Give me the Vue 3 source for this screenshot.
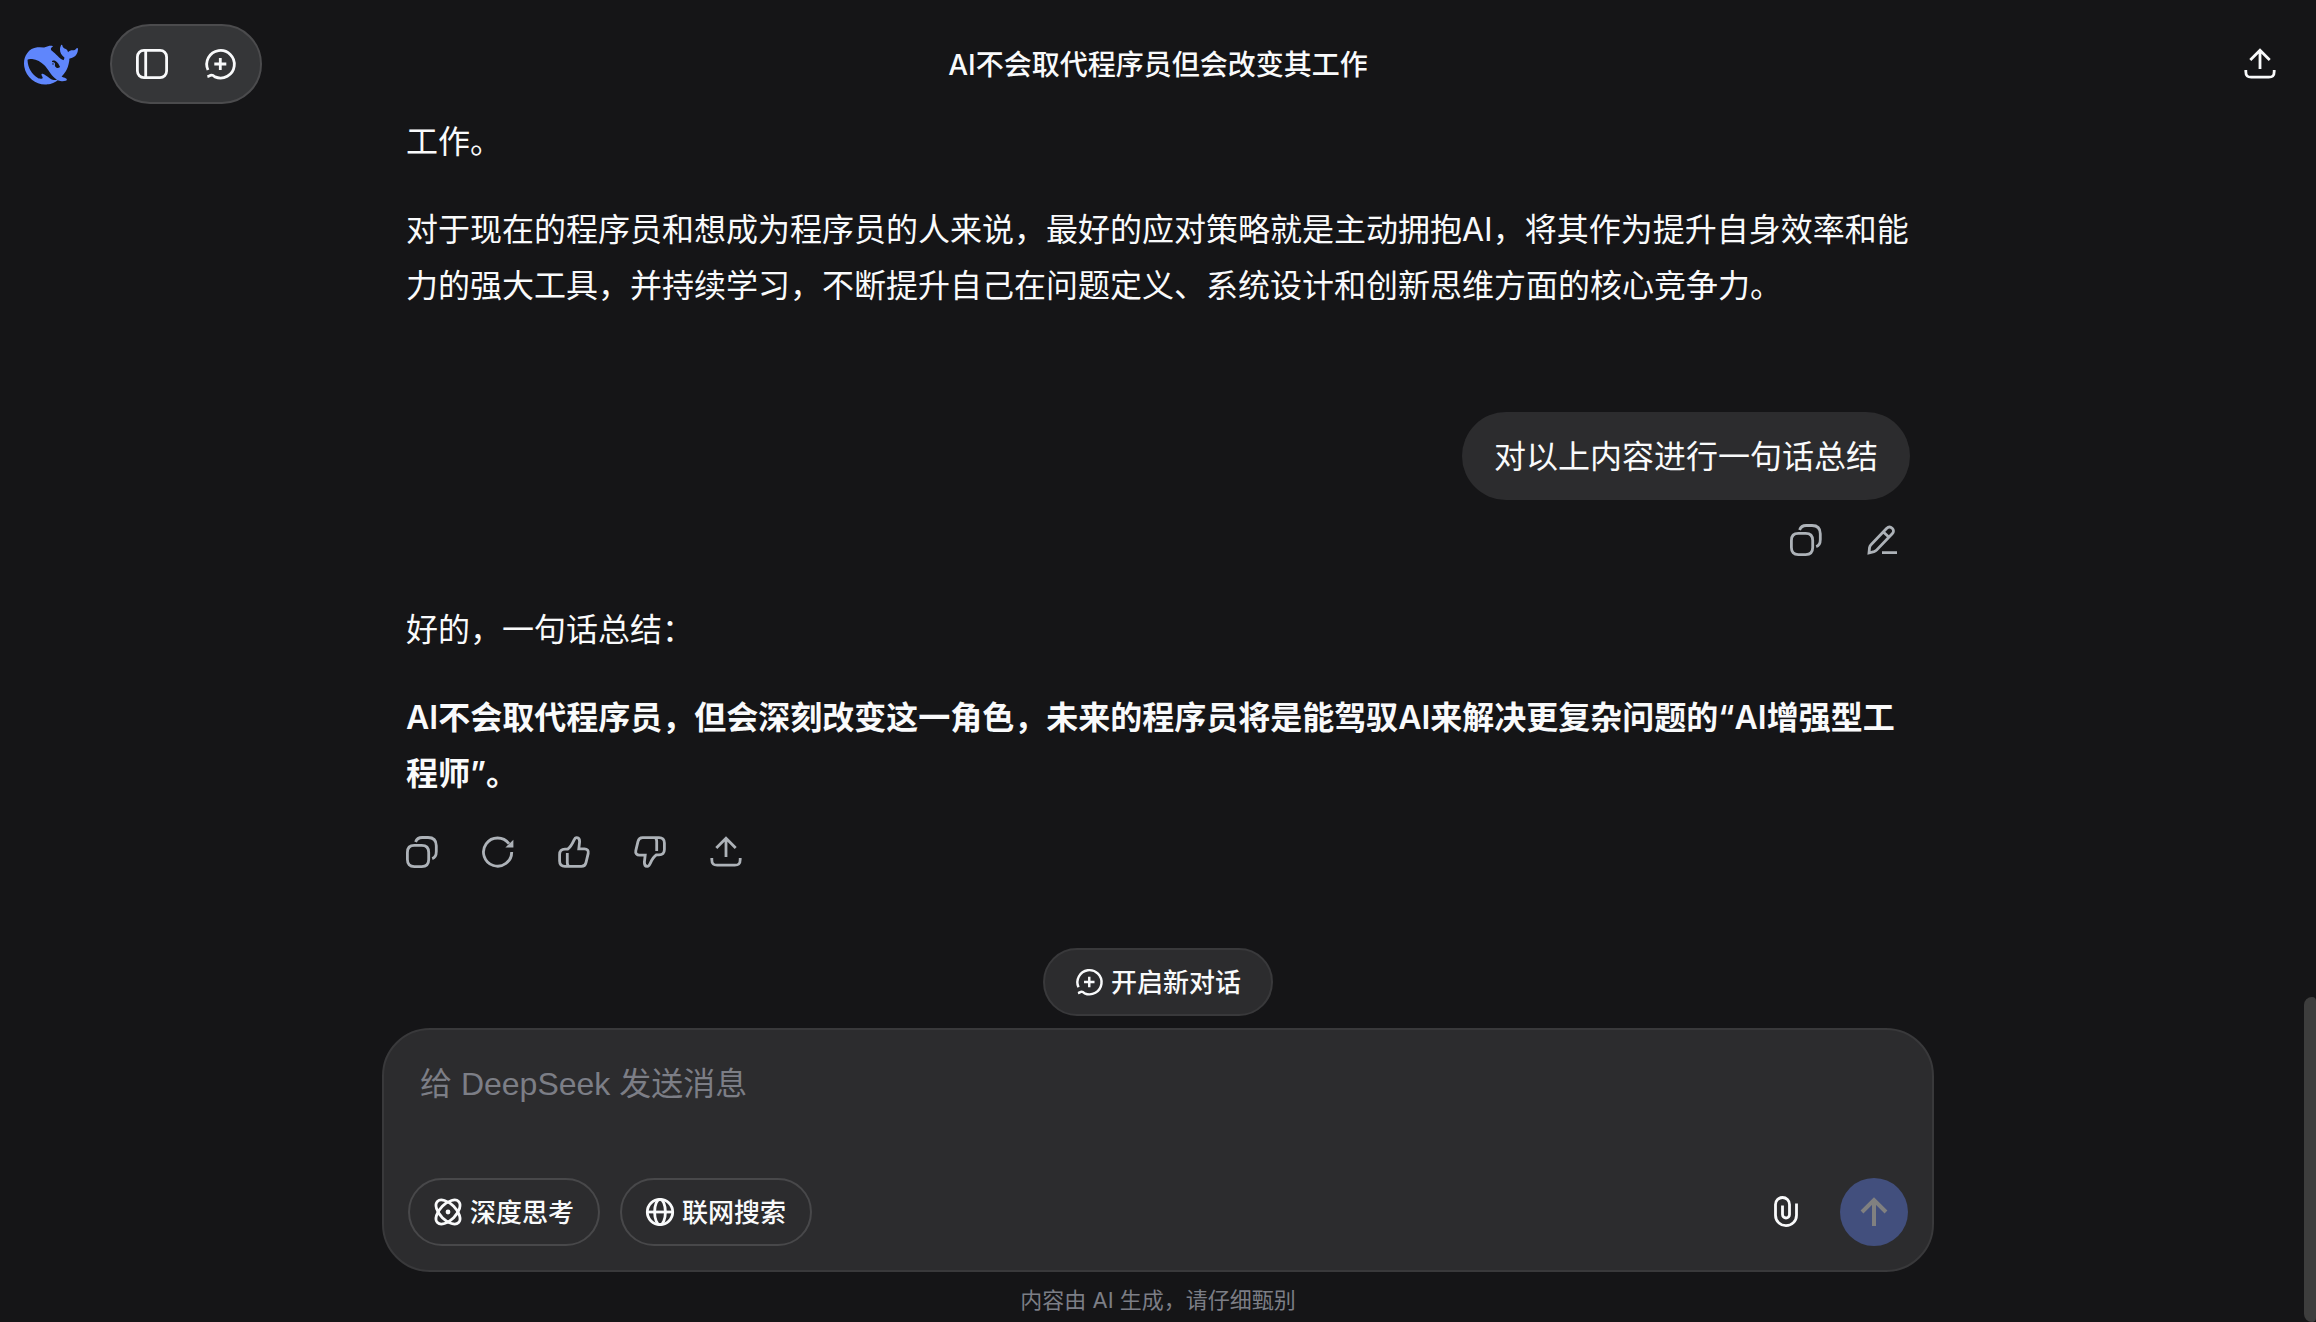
<template>
  <div class="page">
    <header class="topbar">
      <div class="topbar-left">
        <a class="logo" href="#" aria-label="DeepSeek">
          <svg viewBox="0 0 24 24" fill="currentColor">
            <path d="M23.748 4.482c-.254-.124-.364.113-.512.234-.051.039-.094.09-.137.136-.372.397-.806.657-1.373.626-.829-.046-1.537.214-2.163.848-.133-.782-.575-1.248-1.247-1.548-.352-.156-.708-.311-.955-.65-.172-.241-.219-.51-.305-.774-.055-.16-.11-.323-.293-.35-.2-.031-.278.136-.356.276-.313.572-.434 1.202-.422 1.84.027 1.436.633 2.58 1.838 3.393.137.093.172.187.129.323-.082.28-.18.552-.266.833-.055.179-.137.217-.329.14a5.526 5.526 0 01-1.736-1.18c-.857-.828-1.631-1.742-2.597-2.458a11.365 11.365 0 00-.689-.471c-.985-.957.13-1.743.388-1.836.27-.098.093-.432-.779-.428-.872.004-1.67.295-2.687.684a3.055 3.055 0 01-.465.137 9.597 9.597 0 00-2.883-.102c-1.885.21-3.39 1.102-4.497 2.623C.082 8.606-.231 10.684.152 12.85c.403 2.284 1.569 4.175 3.36 5.653 1.858 1.533 3.997 2.284 6.438 2.14 1.482-.085 3.133-.284 4.994-1.86.47.234.962.327 1.78.397.63.059 1.236-.03 1.705-.128.735-.156.684-.837.419-.961-2.155-1.004-1.682-.595-2.113-.926 1.096-1.296 2.746-2.642 3.392-7.003.05-.347.007-.565 0-.845-.004-.17.035-.237.23-.256a4.173 4.173 0 001.545-.475c1.396-.763 1.96-2.015 2.093-3.517.02-.23-.004-.467-.247-.588zM11.581 18c-2.089-1.642-3.102-2.183-3.52-2.16-.392.024-.321.471-.235.763.09.288.207.486.371.739.114.167.192.416-.113.603-.673.416-1.842-.14-1.897-.167-1.361-.802-2.5-1.86-3.301-3.307-.774-1.393-1.224-2.887-1.298-4.482-.02-.386.093-.522.477-.592a4.696 4.696 0 011.529-.039c2.132.312 3.946 1.265 5.468 2.774.868.86 1.525 1.887 2.202 2.891.72 1.066 1.494 2.082 2.48 2.914.348.292.625.514.891.677-.802.09-2.14.11-3.054-.614zm1-6.44a.306.306 0 01.415-.287.302.302 0 01.2.288.306.306 0 01-.31.307.303.303 0 01-.304-.308zm3.11 1.596c-.2.081-.399.151-.59.16a1.245 1.245 0 01-.798-.254c-.274-.23-.47-.358-.552-.758a1.73 1.73 0 01.016-.588c.07-.327-.008-.537-.239-.727-.187-.156-.426-.199-.688-.199a.559.559 0 01-.254-.078.253.253 0 01-.114-.358c.028-.054.16-.186.192-.21.356-.202.767-.136 1.146.016.352.144.618.408 1.001.782.391.451.462.576.685.914.176.265.336.537.445.848.067.195-.019.354-.25.452z" />
          </svg>
        </a>
        <div class="nav-pill">
          <button class="icon-btn" aria-label="展开侧边栏">
            <svg class="icon" viewBox="0 0 32 32">
              <rect x="1.4" y="2.4" width="29.2" height="27.2" rx="6.5" />
              <path d="M9.7 2.4V29.6" />
            </svg>
          </button>
          <button class="icon-btn" aria-label="新对话" @click="newChat">
            <svg class="icon" viewBox="0 0 32 32"><path :d="icons.newChat" /></svg>
          </button>
        </div>
      </div>
      <h1 class="title">{{ title }}</h1>
      <div class="topbar-right">
        <button class="icon-btn" aria-label="分享">
          <svg class="icon" viewBox="0 0 32 32"><path :d="icons.share" /></svg>
        </button>
      </div>
    </header>

    <main class="chat">
      <article class="answer">
        <p>工作。</p>
        <p>对于现在的程序员和想成为程序员的人来说，最好的应对策略就是主动拥抱AI，将其作为提升自身效率和能力的强大工具，并持续学习，不断提升自己在问题定义、系统设计和创新思维方面的核心竞争力。</p>
      </article>

      <article class="question">
        <div class="bubble">对以上内容进行一句话总结</div>
        <div class="actions">
          <button class="icon-btn" aria-label="复制">
            <svg class="icon" viewBox="0 0 32 32"><path :d="icons.copy" /></svg>
          </button>
          <button class="icon-btn" aria-label="编辑">
            <svg class="icon" viewBox="0 0 32 32"><path :d="icons.edit" /></svg>
          </button>
        </div>
      </article>

      <article class="answer">
        <p>好的，一句话总结：</p>
        <p><strong>AI不会取代程序员，但会深刻改变这一角色，未来的程序员将是能驾驭AI来解决更复杂问题的“AI增强型工程师”。</strong></p>
        <div class="actions">
          <button class="icon-btn" aria-label="复制">
            <svg class="icon" viewBox="0 0 32 32"><path :d="icons.copy" /></svg>
          </button>
          <button class="icon-btn" aria-label="重新生成">
            <svg class="icon" viewBox="0 0 32 32">
              <path d="M29.7 16A14.1 14.1 0 1 1 27 7.8" />
              <path class="solid" d="M31.4 3.8V11.6H23.4Z" />
            </svg>
          </button>
          <button class="icon-btn" aria-label="喜欢">
            <svg class="icon" viewBox="0 0 32 32"><path :d="icons.thumb" /></svg>
          </button>
          <button class="icon-btn" aria-label="不喜欢">
            <svg class="icon" viewBox="0 0 32 32"><path :d="icons.thumb" transform="rotate(180 16 16)" /></svg>
          </button>
          <button class="icon-btn" aria-label="分享">
            <svg class="icon" viewBox="0 0 32 32"><path :d="icons.share" /></svg>
          </button>
        </div>
      </article>
    </main>

    <footer class="bottom">
      <button class="new-chat" @click="newChat">
        <svg class="icon small" viewBox="0 0 32 32"><path :d="icons.newChat" /></svg>
        <span>开启新对话</span>
      </button>

      <form class="composer" @submit.prevent="send">
        <textarea v-model="message" aria-label="消息" placeholder="给 DeepSeek 发送消息"></textarea>
        <div class="tools">
          <button type="button" class="toggle" :aria-pressed="deepThink" @click="deepThink = !deepThink">
            <svg class="icon small" viewBox="0 0 28 28">
              <ellipse cx="14" cy="14" rx="15" ry="8" transform="rotate(45 14 14)" />
              <ellipse cx="14" cy="14" rx="15" ry="8" transform="rotate(-45 14 14)" />
              <circle class="solid" cx="14" cy="14" r="2.4" />
            </svg>
            <span>深度思考</span>
          </button>
          <button type="button" class="toggle" :aria-pressed="webSearch" @click="webSearch = !webSearch">
            <svg class="icon small" viewBox="0 0 28 28">
              <circle cx="14" cy="14" r="12.7" />
              <ellipse cx="14" cy="14" rx="5.4" ry="12.7" />
              <path d="M1.3 14H26.7" />
            </svg>
            <span>联网搜索</span>
          </button>
          <div class="send-group">
            <button type="button" class="round" aria-label="上传附件">
              <svg class="icon clip" viewBox="0 0 24 32">
                <path d="M22.5 7.5V19.2A10.5 10.5 0 0 1 1.5 19.2V8.5A7 7 0 0 1 15.5 8.5V18.5A3.5 3.5 0 0 1 8.5 18.5V9.5" />
              </svg>
            </button>
            <button type="submit" class="round send" aria-label="发送">
              <svg class="icon arrow" viewBox="0 0 32 32">
                <path d="M16 30V3.5M4 16L16 4L28 16" />
              </svg>
            </button>
          </div>
        </div>
      </form>

      <p class="notice">内容由 AI 生成，请仔细甄别</p>
    </footer>

    <div class="scroll-thumb" aria-hidden="true"></div>
  </div>
</template>

<script setup>
import { ref } from 'vue';

const title = 'AI不会取代程序员但会改变其工作';

const message = ref('');
const deepThink = ref(false);
const webSearch = ref(false);

const icons = {
  newChat: 'M4 22A13.8 13.8 0 1 1 11 28.9C9.4 27.4 8 26.8 6.5 27.4C5.5 27.9 4.6 28.4 3.4 28.7M16.3 10V22M10.3 16H22.3',
  copy: 'M8.3 9.4H15.7Q22.7 9.4 22.7 16.4V23.6Q22.7 30.6 15.7 30.6H8.3Q1.4 30.6 1.4 23.6V16.4Q1.4 9.4 8.3 9.4ZM9.6 6C10.6 3 13 1.5 16.2 1.5H22C27.8 1.5 30.3 4 30.3 9.8V15.4C30.3 19 29 21.6 26.2 22.6',
  edit: 'M3 29L3.5 23.8C3.7 22.5 4.1 21.6 5 20.7L20.5 4.5C22.3 2.7 24.6 2.7 26.2 4.2C27.9 5.8 27.9 8 26.2 9.8L10.8 25.9C10 26.8 9.3 27.3 8 27.7ZM17.4 8L23 13.2M16 28.7H31',
  thumb: 'M9.5 13.2C12.5 11.5 14.5 7.5 16 4.2C16.8 2.2 17.6 1.5 18.8 1.6C21 1.8 21.8 3.6 21.6 6L20.8 12.8H26.5C29.3 12.8 30.8 14.8 30.2 17.4L28 26.6C27.4 29.2 26 30.4 23.4 30.4H7C3.4 30.4 1.6 28.6 1.6 25V18.6C1.6 15 3.4 13.2 7 13.2ZM9.3 17V26.4Q9.3 29.4 11 30.2',
  share: 'M16 2.5V21M6.3 12L16 2.3L25.7 12M1.8 22V23.6C1.8 27.6 3.2 29.2 7.2 29.2H24.8C28.8 29.2 30.2 27.6 30.2 23.6V22',
};

function newChat() {
  message.value = '';
}

function send() {
  if (!message.value.trim()) {
    return;
  }
  message.value = '';
}
</script>

<style>
body {
  margin: 0;
  background: #151517;
}
</style>

<style scoped>
.page {
  display: flex;
  flex-direction: column;
  min-height: 100vh;
  color: #f9fafb;
  font-family: Inter, "Noto Sans CJK SC", sans-serif;
  font-size: 32px;
  line-height: 56px;
}

button {
  display: flex;
  align-items: center;
  justify-content: center;
  padding: 0;
  border: none;
  background: none;
  color: inherit;
  font: inherit;
  cursor: pointer;
}

.icon {
  display: block;
  width: 32px;
  height: 32px;
  overflow: visible;
  fill: none;
  stroke: currentColor;
  stroke-width: 2.8;
}

.icon.small {
  width: 28px;
  height: 28px;
}

.icon .solid {
  fill: currentColor;
  stroke: none;
}

.topbar {
  display: grid;
  grid-template-columns: 1fr auto 1fr;
  align-items: center;
  padding: 24px 24px 10px;
}

.topbar-left {
  display: flex;
  align-items: center;
  gap: 32px;
}

.logo {
  padding-top: 2px;
  color: #5f86fc;
}

.logo svg {
  display: block;
  width: 54px;
  height: 54px;
}

.nav-pill {
  display: flex;
  align-items: center;
  gap: 36px;
  box-sizing: border-box;
  height: 80px;
  padding: 0 24px;
  border: 2px solid #4b4b4d;
  border-radius: 40px;
  background: #353638;
}

.title {
  margin: 0;
  padding-top: 2px;
  font-size: 28px;
  font-weight: 500;
  line-height: 40px;
}

.topbar-right {
  display: flex;
  justify-content: flex-end;
  padding-right: 16px;
}

.chat {
  flex: 1;
  box-sizing: border-box;
  width: 100%;
  max-width: 1504px;
  margin: 0 auto;
}

.answer p {
  margin: 0 0 32px;
}

.answer strong {
  font-weight: 600;
}

.actions {
  display: flex;
  gap: 44px;
  color: #adb2b8;
}

.question {
  display: flex;
  flex-direction: column;
  align-items: flex-end;
  gap: 24px;
  padding: 66px 0 46px;
}

.question .actions {
  padding-right: 12px;
}

.bubble {
  padding: 17px 32px 15px;
  border-radius: 44px;
  background: #2c2c2e;
}

.answer .actions {
  padding-top: 2px;
}

.bottom {
  display: flex;
  flex-direction: column;
  align-items: center;
}

.new-chat,
.toggle {
  gap: 8px;
  box-sizing: border-box;
  height: 68px;
  padding: 0 24px;
  border: 2px solid #48484a;
  border-radius: 34px;
  font-size: 26px;
  font-weight: 500;
  line-height: 40px;
}

.new-chat span,
.toggle span {
  padding-top: 2px;
}

.new-chat {
  margin-bottom: 12px;
  padding: 0 30px;
  border-color: #39393b;
  background: #2c2c2e;
}

.composer {
  box-sizing: border-box;
  width: 100%;
  max-width: 1552px;
  padding: 30px 24px 24px;
  border: 2px solid #39393b;
  border-radius: 48px;
  background: #2c2c2e;
}

.composer textarea {
  display: block;
  box-sizing: border-box;
  width: 100%;
  height: 96px;
  margin-bottom: 22px;
  padding: 0 12px;
  border: none;
  outline: none;
  resize: none;
  background: none;
  color: inherit;
  font-family: "Liberation Sans", "Noto Sans CJK SC", sans-serif;
  font-size: 32px;
  line-height: 48px;
}

.composer textarea::placeholder {
  color: #7c7e86;
}

.tools,
.send-group {
  display: flex;
  gap: 20px;
}

.send-group {
  margin-left: auto;
}

.round {
  width: 68px;
  height: 68px;
  border-radius: 50%;
}

.clip {
  width: 24px;
}

.send {
  background: #424f7d;
  color: #808080;
}

.arrow {
  stroke-width: 4;
}

.notice {
  margin: 0;
  padding: 12px 0 6px;
  color: #7c7e86;
  font-size: 22px;
  line-height: 32px;
}

.scroll-thumb {
  position: fixed;
  right: 0;
  bottom: 0;
  width: 12px;
  height: 325px;
  border-radius: 8px 4px 4px 8px;
  background: #3d3d3d;
}
</style>
